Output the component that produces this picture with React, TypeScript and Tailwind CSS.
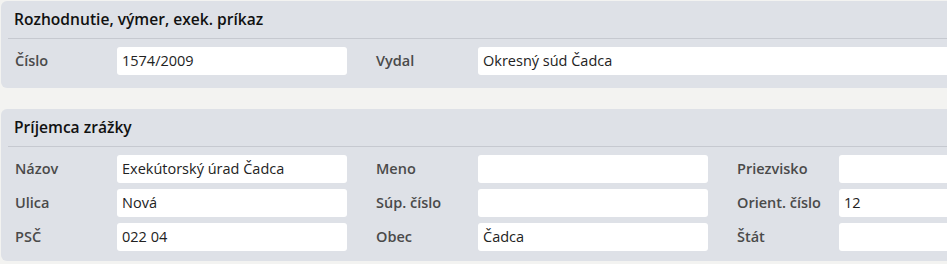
import React from "react";

const font = { fontFamily: '"Open Sans", "Noto Sans", sans-serif' };

function Field({ label, value, wide }: { label: string; value: string; wide?: boolean }) {
  return (
    <div className={wide ? "flex items-center flex-1" : "flex items-center w-[361px] shrink-0"}>
      <div className="w-[102px] shrink-0 text-[14.5px] font-semibold text-[#4a4a4a]">{label}</div>
      <div
        className={
          (wide ? "flex-1 " : "w-[230px] ") +
          "h-[28px] bg-white rounded-[3px] flex items-center pl-[5px] text-[14.5px] text-[#222]"
        }
      >
        {value}
      </div>
    </div>
  );
}

function Panel({ title, children }: { title: string; children: React.ReactNode }) {
  return (
    <div className="ml-[1px] w-[1100px] bg-[#dee1e7] rounded-[6px]">
      <div className="h-[37px] flex items-center pl-[13px] text-[15.6px] font-semibold text-[#111]">{title}</div>
      <div className="ml-[7px] h-px bg-[#c6c9d0]" />
      {children}
    </div>
  );
}

export default function App() {
  return (
    <div className="w-[947px] h-[264px] overflow-hidden bg-[#f3f3f1] pt-[1px]" style={font}>
      <Panel title="Rozhodnutie, výmer, exek. príkaz">
        <div className="pt-[8px] pb-[13px] pl-[14px] flex">
          <Field label="Číslo" value="1574/2009" />
          <Field label="Vydal" value="Okresný súd Čadca" wide />
        </div>
      </Panel>
      <div className="h-[21px]" />
      <Panel title="Príjemca zrážky">
        <div className="pt-[8px] pb-[10px] pl-[14px] flex flex-col gap-[6px]">
          <div className="flex">
            <Field label="Názov" value="Exekútorský úrad Čadca" />
            <Field label="Meno" value="" />
            <Field label="Priezvisko" value="" />
          </div>
          <div className="flex">
            <Field label="Ulica" value="Nová" />
            <Field label="Súp. číslo" value="" />
            <Field label="Orient. číslo" value="12" />
          </div>
          <div className="flex">
            <Field label="PSČ" value="022 04" />
            <Field label="Obec" value="Čadca" />
            <Field label="Štát" value="" />
          </div>
        </div>
      </Panel>
    </div>
  );
}
